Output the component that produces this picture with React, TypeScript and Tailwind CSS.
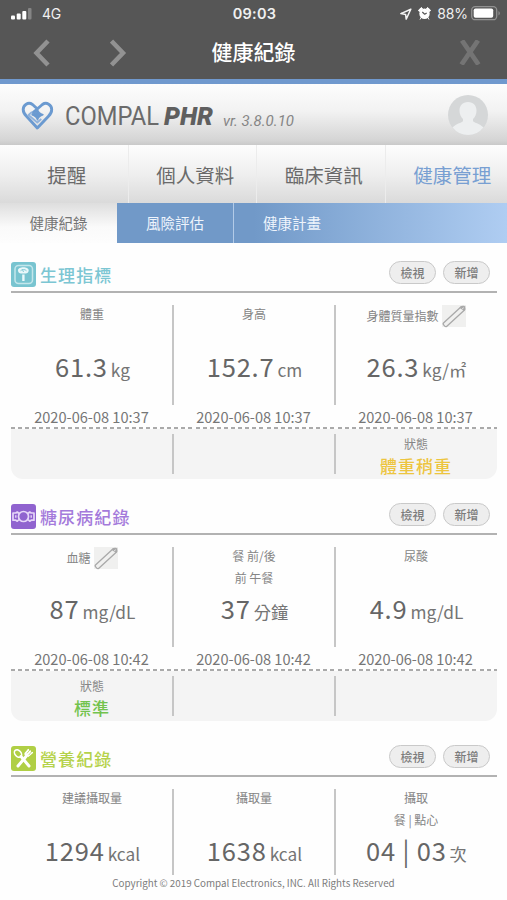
import type { ReactNode } from 'react';
import clsx from 'clsx';

interface Cell {
  label: string;
  subLabel?: string;
  editable?: boolean;
  value: string;
  unit: string;
  date?: string;
  status?: string;
  statusClass?: string;
}

interface SectionProps {
  title: string;
  titleClass: string;
  icon: ReactNode;
  cells: Cell[];
}

const ScaleIcon = () => (
  <svg width="25" height="25" viewBox="0 0 25 25" fill="none">
    <rect width="25" height="25" rx="3" fill="#78c4d0" />
    <rect x="4" y="3.5" width="17.5" height="18" rx="3.5" stroke="#c3e6eb" strokeWidth="1.5" />
    <path d="M7 8.300C7 4.300 17.700 4.300 17.700 8.300c0 2.200-1.700 3.200-3 3.200h-4.700c-1.500 0-3-1-3-3.200Z" fill="#eaf8fa" />
    <path d="M9.500 8.800c1.500-1.700 4.500-1.700 6 0M12.500 10l-1-2.500" stroke="#78c4d0" strokeWidth=".9" />
    <path d="M12.400 12.500v6.500" stroke="#eaf8fa" strokeWidth="2.400" />
  </svg>
);

const CandyIcon = () => (
  <svg width="25" height="25" viewBox="0 0 25 25" fill="none" stroke="#e6d6f8" strokeWidth="1.700" strokeLinejoin="round">
    <rect width="25" height="25" rx="3" fill="#9063cf" stroke="none" />
    <circle cx="12.500" cy="12.500" r="5" />
    <path d="M8 9.500 6.300 8 4.800 9H2v7.200h2.800l1.500 1L8 15.500M17 9.500 18.700 8l1.500 1H23v7.200h-2.800l-1.500 1L17 15.500" />
    <path d="M4.800 11.300v2.500M20.200 11.300v2.500" strokeWidth="1.400" />
  </svg>
);

const MealIcon = () => (
  <svg width="25" height="25" viewBox="0 0 25 25" fill="none" strokeLinecap="round">
    <rect width="25" height="25" rx="3" fill="#b0cf45" />
    <ellipse cx="7" cy="7.500" rx="3" ry="4.200" transform="rotate(-42 7 7.500)" stroke="#fff" strokeWidth="1.600" />
    <path d="m10 10.500 8 9.500" stroke="#fff" strokeWidth="3" />
    <path d="m15 10.500-8 9.500" stroke="#fff" strokeWidth="3" />
    <path d="m17 3-3.500 4c-.8 2 1.800 4.500 4 3.500L21.500 7" fill="#fff" />
    <path d="m17.500 3.500-2.500 4M19.500 5l-3 3.500M21.500 6.500l-4 3.500" stroke="#fff" strokeWidth="1.200" />
    <path d="m18.800 4-2.500 3M20.500 5.800l-2.600 3" stroke="#b0cf45" strokeWidth=".7" />
  </svg>
);

const PencilIcon = () => (
  <svg width="24" height="23" viewBox="0 0 24 23" fill="none" stroke="#a9a9a9" strokeWidth="1.300" strokeLinejoin="round">
    <rect width="24" height="22" fill="#f0f0ef" stroke="none" />
    <rect x="-13.300" y="-2.300" width="26.600" height="4.600" rx="1.500" transform="translate(12 11.500) rotate(-42.500)" />
    <path d="m17.500 2.800 1.500-1.500c1.300-.7 3.800-.8 4.200.2.300 1.200.2 3-1.200 4.500Z" fill="#a9a9a9" stroke="none" />
    <path d="m19.800 4.200 2-1.500" stroke="#e3e3e3" strokeWidth="1" />
  </svg>
);

const StatusBar = () => (
  <div className="grid h-[27px] grid-cols-3 items-center pr-[7px] pl-[11px] font-[Inter,sans-serif] text-[14px] leading-none text-[#f0f0f0]">
    <div className="flex items-center gap-[10px]">
      <svg width="21" height="12" viewBox="0 0 21 12" fill="#fff">
        <rect y="7.500" width="4" height="4" rx="1" />
        <rect x="5.700" y="5.500" width="4" height="6" rx="1" />
        <rect x="11.300" y="3" width="4" height="8.500" rx="1" />
        <rect x="17" width="3.500" height="11.500" rx="1" fill="#858585" />
      </svg>
      <span className="tracking-[-0.2px]">4G</span>
    </div>
    <div className="pt-[2px] pr-[2px] text-center text-[14.5px] font-semibold tracking-[0.2px]">09:03</div>
    <div className="flex items-center justify-end">
      <svg width="12" height="12" viewBox="0 0 12 12" fill="none" stroke="#f5f5f5" strokeWidth="1.500" strokeLinejoin="round">
        <path d="M10.800 1.200.9 5.600l4.700.8.600 4.700Z" />
      </svg>
      <svg className="ml-[6px]" width="13" height="13" viewBox="0 0 12 13" fill="#fff">
        <circle cx="6" cy="6.700" r="5.200" />
        <path d="M0 3.200 3 .5l1 1L.8 4.500ZM12 3.200 9 .5l-1 1 3.200 3ZM1.500 12.500l1.500-2.500M9 10l1.500 2.500" stroke="#fff" strokeWidth="1" />
        <path d="M6.200 7.200 3.800 5M6.200 7.200 8.200 6" fill="none" stroke="#565656" strokeWidth="1.200" />
      </svg>
      <span className="ml-[6px] tracking-[-0.1px]">88%</span>
      <svg className="-mr-px ml-[3px]" width="30" height="15" viewBox="0 0 30 15" fill="none">
        <rect x=".7" y=".7" width="25" height="13" rx="3.500" stroke="#929292" strokeWidth="1.300" />
        <rect x="2.700" y="2.500" width="19.500" height="9.300" rx="1.800" fill="#fff" />
        <path d="M27.500 5v4.500c1.800-.8 1.800-3.700 0-4.500Z" fill="#929292" />
      </svg>
    </div>
  </div>
);

const NavBar = () => (
  <div className="grid h-[52px] grid-cols-3 items-center">
    <div className="flex gap-[60px] pb-px pl-[33px]">
      <svg width="17" height="28" viewBox="0 0 17 28" fill="none" stroke="#929292" strokeWidth="4.500">
        <path d="M15 2 3.500 14 15 26" />
      </svg>
      <svg width="17" height="28" viewBox="0 0 17 28" fill="none" stroke="#929292" strokeWidth="4.500">
        <path d="m1.500 2 11.500 12-11.500 12" />
      </svg>
    </div>
    <h1 className="pb-[4px] text-center text-[21px] leading-none font-medium whitespace-nowrap text-white">健康紀錄</h1>
    <div className="flex justify-end pr-[26px] pb-px">
      <svg width="22" height="25" viewBox="0 0 22 25" stroke="#747474" strokeWidth="4.800">
        <path d="M3 .5 19.500 24.500M19 .5 2.500 24.500" />
      </svg>
    </div>
  </div>
);

const BrandBar = () => (
  <div className="flex h-[61px] items-center justify-between bg-[linear-gradient(#fdfdfd,#f2f2f2_45%,#d4d4d4_93%,#c9c9c9)] pr-[19px] pl-[20px]">
    <svg width="280" height="40" viewBox="0 0 280 40" fontFamily="Roboto, sans-serif">
      <g fill="none" stroke="#6b9ad0" strokeWidth="2.900" strokeLinejoin="round">
        <path d="M17.500 14 12.500 9.500C8 6.500 3.200 10 3.200 14.500c0 3 1.300 4.800 3.300 6.700L17.300 33 28.500 21.300c2-2 3.200-3.800 3.200-6.800 0-4.500-5-8-9.300-5L12 18.500" />
        <path d="m12 17-3.500 3 8.800 7.500 4-3.500" strokeWidth="1.800" stroke="#8fb2dc" />
        <path d="M17.500 14.500c.8 3 2 4.300 5.500 5.200-3.500.9-4.700 2.200-5.500 5.200-.8-3-2-4.300-5.500-5.200 3.500-.9 4.700-2.200 5.500-5.200Z" fill="#6b9ad0" strokeWidth="1.400" />
      </g>
      <text x="45" y="29.500" fontSize="26" fill="#6b6b6b" textLength="94" lengthAdjust="spacingAndGlyphs">
        COMPAL
      </text>
      <text
        x="144"
        y="29.500"
        fontSize="26"
        fontWeight="900"
        fontStyle="italic"
        fill="#5f5f5f"
        textLength="49"
        lengthAdjust="spacingAndGlyphs"
      >
        PHR
      </text>
      <text x="203" y="31" fontSize="14.500" fontStyle="italic" fill="#858585" textLength="71" lengthAdjust="spacingAndGlyphs">
        vr. 3.8.0.10
      </text>
    </svg>
    <svg width="40" height="40" viewBox="0 0 40 40">
      <circle cx="20" cy="20" r="20" fill="#d5d7d8" />
      <path
        d="M20 7c5.500 0 8.500 4 8.500 8.500 0 4-1.500 6.500-3.500 8.500v2c0 1.500 7 2.500 10.500 6.500A20 20 0 0 1 20 40 20 20 0 0 1 4.500 32.500C8 28.500 15 27.500 15 26v-2c-2-2-3.500-4.500-3.500-8.500C11.500 11 14.500 7 20 7Z"
        fill="#edeff0"
      />
    </svg>
  </div>
);

const tabs = ['提醒', '個人資料', '臨床資訊', '健康管理'];

const Tabs = () => (
  <nav className="flex h-[58px] w-[514px] bg-[linear-gradient(#fdfdfd,#efefef_50%,#dadada)]">
    {tabs.map((tab, i) => (
      <div
        key={tab}
        className={clsx(
          'flex w-[128.5px] items-center justify-center border-r border-[#ececec] pt-px pl-[6px] text-[19.5px] leading-none',
          i === 3 ? 'text-[#789fd2]' : 'text-[#6a6a6a]'
        )}
      >
        {tab}
      </div>
    ))}
  </nav>
);

const SubTabs = () => (
  <nav className="flex h-[40px] bg-[linear-gradient(90deg,#7199c8_50%,#afcdf2)] text-[14.5px] leading-none text-[#eef4fc]">
    <div className="flex w-[117px] items-center justify-center bg-[linear-gradient(#dedede,#fafafa_60%,#fdfdfd)] pt-px text-[#757575]">健康紀錄</div>
    <div className="flex w-[117px] items-center justify-center border-r border-[#b3cbe8] pt-px">風險評估</div>
    <div className="flex w-[116px] items-center justify-center pt-px">健康計畫</div>
  </nav>
);

const PillButton = ({ children }: { children: ReactNode }) => (
  <button className="flex h-[23px] w-[47px] items-center justify-center rounded-full border-[1.5px] border-[#c9c9c9] bg-[#eeeeee] text-[12px] leading-none font-medium text-[#7c7c7c]">
    {children}
  </button>
);

const Section = ({ title, titleClass, icon, cells }: SectionProps) => (
  <section className="mr-[10px] ml-[11px] h-[242px] shrink-0">
    <div className="flex h-[50px] items-end border-b-2 border-[#b2b2b2] pb-[4px]">
      {icon}
      <h2 className={clsx('ml-[4px] text-[17px] leading-[24px] font-medium tracking-[1.1px]', titleClass)}>{title}</h2>
      <div className="mb-[3px] ml-auto flex gap-[7px] pr-[7px]">
        <PillButton>檢視</PillButton>
        <PillButton>新增</PillButton>
      </div>
    </div>

    <div className="grid grid-cols-3 pt-[12px]">
      {cells.map((cell, i) => (
        <div key={cell.label} className="text-center">
          <div className={clsx('flex h-[100px] flex-col', i < 2 && '-mr-px border-r-2 border-[#c6c6c6] pl-px')}>
            <div className="h-[42px] text-[12px] leading-[22px] text-[#858585]">
              <div className={clsx('flex h-[22px] items-center justify-center gap-[3px]', !cell.editable && 'pb-[4px]')}>
                {cell.label}
                {cell.editable && <PencilIcon />}
              </div>
              {cell.subLabel && <div className="-mt-[2px]">{cell.subLabel}</div>}
            </div>
            <div className="flex h-[38px] items-baseline justify-center gap-[3px] pl-px text-[#666]">
              <span className="text-[25.5px] leading-[38px] tracking-[0.8px]">{cell.value}</span>
              <span className="text-[17.3px] leading-[38px] text-[#747474]">{cell.unit}</span>
            </div>
          </div>
          <div className="h-[22px] pr-px text-[14.6px] leading-[23px] text-[#767676]">{cell.date}</div>
        </div>
      ))}
    </div>

    <div className="h-[52px] rounded-b-[12px] bg-[#f4f4f4]">
      <div className="h-[1.5px] bg-[repeating-linear-gradient(90deg,#aaaaaa_0_4px,#ffffff_4px_7.1px)]" />
      <div className="grid grid-cols-3 pt-[5px]">
        {cells.map((cell, i) => (
          <div key={cell.label} className={clsx('h-[40px] text-center', i < 2 && '-mr-px border-r-2 border-[#c6c6c6] pl-px')}>
            {cell.status && (
              <>
                <div className="text-[12px] leading-[19px] text-[#858585]">狀態</div>
                <div className={clsx('text-[17px] leading-[26px] font-medium tracking-[1px]', cell.statusClass)}>{cell.status}</div>
              </>
            )}
          </div>
        ))}
      </div>
    </div>
  </section>
);

const sections: SectionProps[] = [
  {
    title: '生理指標',
    titleClass: 'text-[#7cc6d3]',
    icon: <ScaleIcon />,
    cells: [
      { label: '體重', value: '61.3', unit: 'kg', date: '2020-06-08 10:37' },
      { label: '身高', value: '152.7', unit: 'cm', date: '2020-06-08 10:37' },
      {
        label: '身體質量指數',
        editable: true,
        value: '26.3',
        unit: 'kg/㎡',
        date: '2020-06-08 10:37',
        status: '體重稍重',
        statusClass: 'text-[#edc53f]',
      },
    ],
  },
  {
    title: '糖尿病紀錄',
    titleClass: 'text-[#a47adb]',
    icon: <CandyIcon />,
    cells: [
      {
        label: '血糖',
        editable: true,
        value: '87',
        unit: 'mg/dL',
        date: '2020-06-08 10:42',
        status: '標準',
        statusClass: 'text-[#73c34d]',
      },
      { label: '餐 前/後', subLabel: '前 午餐', value: '37', unit: '分鐘', date: '2020-06-08 10:42' },
      { label: '尿酸', value: '4.9', unit: 'mg/dL', date: '2020-06-08 10:42' },
    ],
  },
  {
    title: '營養紀錄',
    titleClass: 'text-[#b5d24a]',
    icon: <MealIcon />,
    cells: [
      { label: '建議攝取量', value: '1294', unit: 'kcal' },
      { label: '攝取量', value: '1638', unit: 'kcal' },
      { label: '攝取', subLabel: '餐 | 點心', value: '04 | 03', unit: '次' },
    ],
  },
];

export default function App() {
  return (
    <div className="flex h-[900px] w-[507px] flex-col overflow-hidden bg-[#fefefe] font-['Noto_Sans_CJK_TC',sans-serif]">
      <header className="shrink-0">
        <div className="border-b-[5px] border-[#7099ce] bg-[#565656]">
          <StatusBar />
          <NavBar />
        </div>
        <BrandBar />
        <Tabs />
        <SubTabs />
      </header>
      <main className="min-h-0 flex-1 overflow-hidden">
        {sections.map((section) => (
          <Section key={section.title} {...section} />
        ))}
      </main>
      <footer className="h-[25px] shrink-0 text-center text-[9.8px] leading-[16px] text-[#7c7c7c]">
        Copyright © 2019 Compal Electronics, INC. All Rights Reserved
      </footer>
    </div>
  );
}
